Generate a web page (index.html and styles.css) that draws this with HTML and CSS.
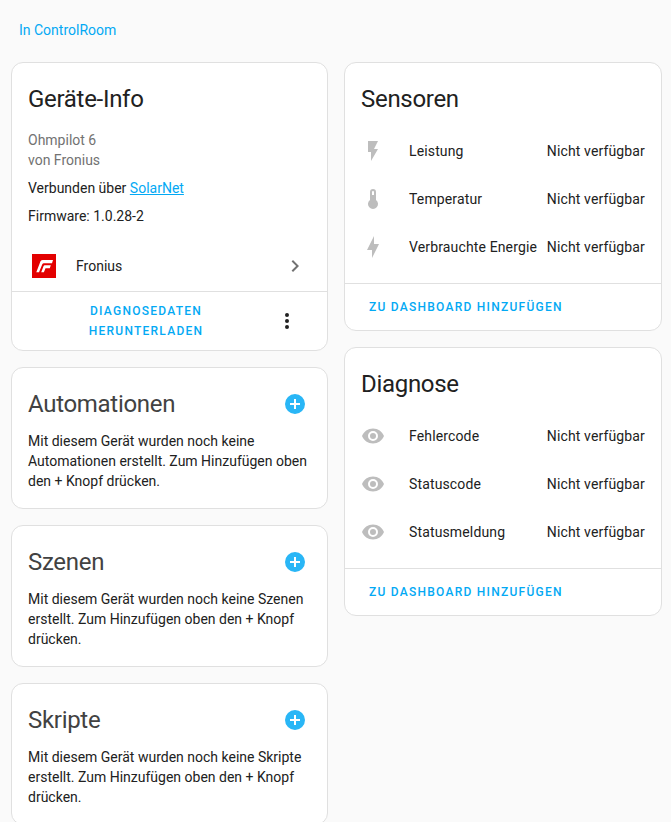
FILE: index.html
```html
<!DOCTYPE html>
<html lang="de">
<head>
    <meta charset="UTF-8">
    <meta name="viewport" content="width=device-width, initial-scale=1.0">
    <title>Ohmpilot 6</title>
    <link rel="stylesheet" href="styles.css">
</head>
<body>

<div class="area-link"><a href="#">In ControlRoom</a></div>

<div class="columns">
    <div class="column">
        <div class="card">
            <h1 class="card-title info-title">Geräte-Info</h1>
            <div class="info">
                <div class="model">Ohmpilot 6<br>von Fronius</div>
                <div class="info-line">Verbunden über <a class="underlined" href="#">SolarNet</a></div>
                <div class="info-line">Firmware: 1.0.28-2</div>
            </div>
            <div class="brand-row">
                <svg class="brand-logo" viewBox="0 0 24 24">
                    <rect width="24" height="24" fill="#e30000"/>
                    <path fill="#fff" d="M8.6 7Q9.4 6 10.8 6H21L20 9.2H11.8Q10.8 9.2 10.3 10.2L7 18.3H4.3Z"/>
                    <path fill="#fff" d="M12.8 11.2H18.8L17.8 14.2H13.5L11.9 18.3H9.2L11.4 12.4Q11.8 11.2 12.8 11.2Z"/>
                </svg>
                <span class="brand-name">Fronius</span>
                <svg class="chevron" viewBox="0 0 24 24"><path d="M8.59,16.58L13.17,12L8.59,7.41L10,6L16,12L10,18L8.59,16.58Z"/></svg>
            </div>
            <div class="card-actions info-actions">
                <a class="action action-wrap" href="#">Diagnosedaten herunterladen</a>
                <svg class="menu-dots" viewBox="0 0 24 24"><path d="M12,16A2,2 0 0,1 14,18A2,2 0 0,1 12,20A2,2 0 0,1 10,18A2,2 0 0,1 12,16M12,10A2,2 0 0,1 14,12A2,2 0 0,1 12,14A2,2 0 0,1 10,12A2,2 0 0,1 12,10M12,4A2,2 0 0,1 14,6A2,2 0 0,1 12,8A2,2 0 0,1 10,6A2,2 0 0,1 12,4Z"/></svg>
            </div>
        </div>

        <div class="card related">
            <div class="related-head">
                <h2 class="card-title related-title">Automationen</h2>
                <svg class="add-icon" viewBox="0 0 24 24"><path d="M17,13H13V17H11V13H7V11H11V7H13V11H17M12,2A10,10 0 0,0 2,12A10,10 0 0,0 12,22A10,10 0 0,0 22,12A10,10 0 0,0 12,2Z"/></svg>
            </div>
            <p class="related-text">Mit diesem Gerät wurden noch keine Automationen erstellt. Zum Hinzufügen oben den + Knopf drücken.</p>
        </div>

        <div class="card related">
            <div class="related-head">
                <h2 class="card-title related-title">Szenen</h2>
                <svg class="add-icon" viewBox="0 0 24 24"><path d="M17,13H13V17H11V13H7V11H11V7H13V11H17M12,2A10,10 0 0,0 2,12A10,10 0 0,0 12,22A10,10 0 0,0 22,12A10,10 0 0,0 12,2Z"/></svg>
            </div>
            <p class="related-text">Mit diesem Gerät wurden noch keine Szenen erstellt. Zum Hinzufügen oben den + Knopf drücken.</p>
        </div>

        <div class="card related">
            <div class="related-head">
                <h2 class="card-title related-title">Skripte</h2>
                <svg class="add-icon" viewBox="0 0 24 24"><path d="M17,13H13V17H11V13H7V11H11V7H13V11H17M12,2A10,10 0 0,0 2,12A10,10 0 0,0 12,22A10,10 0 0,0 22,12A10,10 0 0,0 12,2Z"/></svg>
            </div>
            <p class="related-text">Mit diesem Gerät wurden noch keine Skripte erstellt. Zum Hinzufügen oben den + Knopf drücken.</p>
        </div>
    </div>

    <div class="column">
        <div class="card">
            <h2 class="card-title entity-title">Sensoren</h2>
            <div class="entities">
                <div class="entity">
                    <svg class="entity-icon" viewBox="0 0 24 24"><path d="M7,2V13H10V22L17,10H13L17,2H7Z"/></svg>
                    <span class="entity-name">Leistung</span>
                    <span class="entity-state">Nicht verfügbar</span>
                </div>
                <div class="entity">
                    <svg class="entity-icon" viewBox="0 0 24 24"><path d="M15 13V5A3 3 0 0 0 9 5V13A5 5 0 1 0 15 13M12 4A1 1 0 0 1 13 5V8H11V5A1 1 0 0 1 12 4Z"/></svg>
                    <span class="entity-name">Temperatur</span>
                    <span class="entity-state">Nicht verfügbar</span>
                </div>
                <div class="entity">
                    <svg class="entity-icon" viewBox="0 0 24 24"><path d="M11 15H6L13 1V9H18L11 23V15Z"/></svg>
                    <span class="entity-name">Verbrauchte Energie</span>
                    <span class="entity-state">Nicht verfügbar</span>
                </div>
            </div>
            <div class="card-actions">
                <a class="action" href="#">Zu Dashboard hinzufügen</a>
            </div>
        </div>

        <div class="card">
            <h2 class="card-title entity-title">Diagnose</h2>
            <div class="entities">
                <div class="entity">
                    <svg class="entity-icon" viewBox="0 0 24 24"><path d="M12,9A3,3 0 0,0 9,12A3,3 0 0,0 12,15A3,3 0 0,0 15,12A3,3 0 0,0 12,9M12,17A5,5 0 0,1 7,12A5,5 0 0,1 12,7A5,5 0 0,1 17,12A5,5 0 0,1 12,17M12,4.5C7,4.5 2.73,7.61 1,12C2.73,16.39 7,19.5 12,19.5C17,19.5 21.27,16.39 23,12C21.27,7.61 17,4.5 12,4.5Z"/></svg>
                    <span class="entity-name">Fehlercode</span>
                    <span class="entity-state">Nicht verfügbar</span>
                </div>
                <div class="entity">
                    <svg class="entity-icon" viewBox="0 0 24 24"><path d="M12,9A3,3 0 0,0 9,12A3,3 0 0,0 12,15A3,3 0 0,0 15,12A3,3 0 0,0 12,9M12,17A5,5 0 0,1 7,12A5,5 0 0,1 12,7A5,5 0 0,1 17,12A5,5 0 0,1 12,17M12,4.5C7,4.5 2.73,7.61 1,12C2.73,16.39 7,19.5 12,19.5C17,19.5 21.27,16.39 23,12C21.27,7.61 17,4.5 12,4.5Z"/></svg>
                    <span class="entity-name">Statuscode</span>
                    <span class="entity-state">Nicht verfügbar</span>
                </div>
                <div class="entity">
                    <svg class="entity-icon" viewBox="0 0 24 24"><path d="M12,9A3,3 0 0,0 9,12A3,3 0 0,0 12,15A3,3 0 0,0 15,12A3,3 0 0,0 12,9M12,17A5,5 0 0,1 7,12A5,5 0 0,1 12,7A5,5 0 0,1 17,12A5,5 0 0,1 12,17M12,4.5C7,4.5 2.73,7.61 1,12C2.73,16.39 7,19.5 12,19.5C17,19.5 21.27,16.39 23,12C21.27,7.61 17,4.5 12,4.5Z"/></svg>
                    <span class="entity-name">Statusmeldung</span>
                    <span class="entity-state">Nicht verfügbar</span>
                </div>
            </div>
            <div class="card-actions">
                <a class="action" href="#">Zu Dashboard hinzufügen</a>
            </div>
        </div>
    </div>
</div>

</body>
</html>
```

FILE: styles.css
```css
html {
    height: 822px;
    overflow: hidden;
}

body {
    font-family: 'Roboto', sans-serif;
    font-size: 14px;
    line-height: 20px;
    margin: 0;
    padding: 20px 9px 0 11px;
    background-color: #fafafa;
    color: #212121;
}

a {
    color: #03a9f4;
    text-decoration: none;
}

.area-link {
    padding-left: 8px;
    margin-bottom: 22px;
}

.columns {
    display: grid;
    grid-template-columns: 317px 318px;
    column-gap: 16px;
}

.column {
    display: flex;
    flex-direction: column;
    gap: 16px;
}

.card {
    background: #fff;
    border: 1px solid #e0e0e0;
    border-radius: 12px;
}

.card-title {
    margin: 0;
    font-size: 24px;
    font-weight: 400;
    line-height: 32px;
    letter-spacing: -0.3px;
}

/* Geräte-Info */
.info-title {
    padding: 20px 16px 0;
}

.info {
    padding: 15px 16px 0;
}

.model {
    color: #727272;
    margin-bottom: 8px;
}

.info-line {
    margin-bottom: 8px;
}

.underlined {
    text-decoration: underline;
}

.brand-row {
    display: flex;
    align-items: center;
    height: 48px;
    padding: 0 20px 0 20px;
    margin-top: 16px;
}

.brand-logo {
    width: 24px;
    height: 24px;
    margin-right: 20px;
}

.brand-name {
    flex: 1;
}

.chevron {
    width: 24px;
    height: 24px;
    fill: #727272;
}

.card-actions {
    border-top: 1px solid #e0e0e0;
    padding: 8px 16px;
    margin-top: 12px;
}

.info-actions {
    display: flex;
    align-items: center;
    margin-top: 1px;
    padding: 4px 28px 4px 8px;
}

.action {
    display: block;
    padding: 5px 8px;
    font-size: 12px;
    font-weight: 500;
    letter-spacing: 1.25px;
    line-height: 20px;
    text-transform: uppercase;
    width: fit-content;
}

.action-wrap {
    flex: 1;
    width: auto;
    text-align: center;
    padding: 5px 32px 5px 29px;
}

.menu-dots {
    width: 24px;
    height: 24px;
    fill: #212121;
}

/* Automationen, Szenen, Skripte */
.related {
    padding: 20px 20px 17px 16px;
}

.related-head {
    display: flex;
    justify-content: space-between;
    align-items: center;
    margin-bottom: 11px;
}

.related-title {
    color: #424242;
}

.add-icon {
    width: 24px;
    height: 24px;
    fill: #29b6f6;
}

.related-text {
    margin: 0;
}

/* Sensoren, Diagnose */
.entity-title {
    padding: 20px 16px 0;
}

.entities {
    padding-top: 12px;
}

.entity {
    display: flex;
    align-items: center;
    height: 48px;
    padding: 0 16px;
    letter-spacing: 0.14px;
}

.entity-icon {
    width: 24px;
    height: 24px;
    fill: #bdbdbd;
    margin-right: 24px;
    flex: none;
}

.entity-name {
    flex: 1;
}
```
